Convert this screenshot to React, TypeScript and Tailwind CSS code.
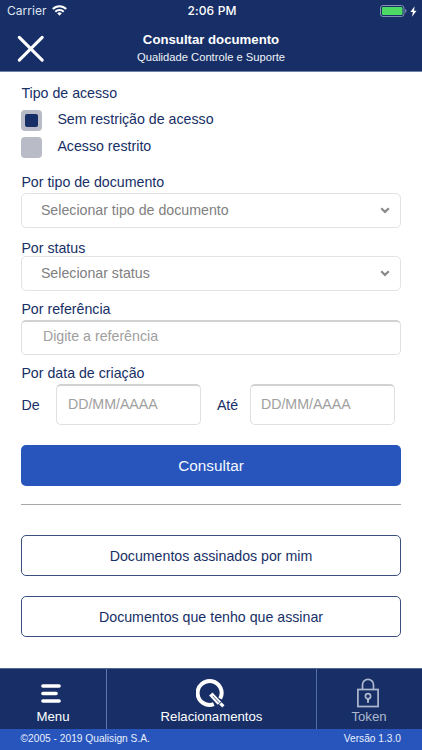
import React from "react";

function StatusBar() {
  return (
    <div className="flex h-[22px] items-center pl-[7px] pr-[5px] font-[Inter,sans-serif] text-[12px] leading-[14px]">
      <div className="flex flex-1 items-center gap-[5px]">
        <span className="text-[#dfe4ef] tracking-[0.05px]">Carrier</span>
        <svg width="15" height="11" viewBox="0 0 15 11" fill="none" stroke="#fff" strokeWidth="2" className="-mt-px">
          <path d="M0.8 4a9.4 9.4 0 0 1 13.4 0" />
          <path d="M3.3 6.7a5.9 5.9 0 0 1 8.4 0" />
          <path d="M5.2 8.3a3.3 3.3 0 0 1 4.6 0L7.5 10.7z" fill="#fff" stroke="none" />
        </svg>
      </div>
      <span className="font-medium tracking-[0.15px]">2:06 PM</span>
      <div className="flex flex-1 items-center justify-end gap-[3px]">
        <svg width="27" height="12" viewBox="0 0 27 12">
          <rect x="0.5" y="0.5" width="23.5" height="11" rx="2.5" fill="none" stroke="#8091b3" />
          <rect x="2" y="2" width="20.5" height="8" rx="1" fill="#4cd964" />
          <path d="M25.2 4v4q1.3-.7 1.3-2t-1.3-2" fill="#8091b3" />
        </svg>
        <svg width="7" height="11" viewBox="0 0 7 11" fill="#fff">
          <path d="M4.6 0.3 0.4 6h2.5L2 10.7 6.5 4.7H4z" />
        </svg>
      </div>
    </div>
  );
}

function Header() {
  return (
    <header className="h-[72px] shrink-0 border-b border-[#7182a8] bg-[#172f66] text-white">
      <StatusBar />
      <div className="grid h-[49px] grid-cols-[61px_1fr_61px]">
        <svg width="28" height="28" viewBox="0 0 28 28" stroke="#fff" strokeWidth="3.1" strokeLinecap="round" className="ml-[17px] mt-[13px]">
          <path d="M2.3 2.3 25.2 25.2M25.2 2.3 2.3 25.2" />
        </svg>
        <div className="pt-[9px] text-center">
          <h1 className="text-[13.2px] font-bold leading-[18px]">Consultar documento</h1>
          <p className="text-[11.2px] leading-4 text-[#f0f3f9]">Qualidade Controle e Suporte</p>
        </div>
      </div>
    </header>
  );
}

function Checkbox({ label, checked = false }: { label: string; checked?: boolean }) {
  return (
    <div className="flex h-[21px] items-center gap-[15px]">
      <span className="flex size-[21px] items-center justify-center rounded-[4px] bg-[#b9bcc7]">
        {checked && <span className="size-[13px] rounded-[2px] bg-[#172f66]" />}
      </span>
      <span className="pb-[3px]">{label}</span>
    </div>
  );
}

function Select({ text }: { text: string }) {
  return (
    <div className="flex h-[35px] items-center justify-between rounded-[5px] border border-[#e3e3e3] pl-[18.5px] pr-[10px] text-[#808080]">
      <span className="pb-px">{text}</span>
      <svg width="10" height="7" viewBox="0 0 10 7" fill="none" stroke="#8a8a8a" strokeWidth="2.2">
        <path d="M1.2 1.3 5 4.9l3.8-3.6" />
      </svg>
    </div>
  );
}

function Field({ placeholder, className }: { placeholder: string; className: string }) {
  return (
    <input
      placeholder={placeholder}
      className={`rounded-[5px] border border-t-[2px] border-[#e0e0e0] border-t-[#d2d2d2] placeholder:text-[#a0a0a0] placeholder:opacity-100 ${className}`}
    />
  );
}

const outlined = "flex h-[41px] items-center justify-center rounded-[5px] border border-[#3c5080]";

export default function App() {
  return (
    <div className="flex h-[750px] w-[422px] flex-col overflow-hidden bg-white font-['Liberation_Sans',Arial,sans-serif]">
      <Header />
      <main className="flex flex-1 flex-col pl-[21.4px] pr-[21.4px] pt-[13px] text-[14.2px] leading-4 text-[#172f66]">
        <p>Tipo de acesso</p>
        <div className="mt-[9px] flex flex-col gap-[5.5px]">
          <Checkbox label="Sem restrição de acesso" checked />
          <Checkbox label="Acesso restrito" />
        </div>
        <p className="mt-[16.5px]">Por tipo de documento</p>
        <div className="mt-[3px]">
          <Select text="Selecionar tipo de documento" />
        </div>
        <p className="mt-3">Por status</p>
        <Select text="Selecionar status" />
        <p className="mt-[10px]">Por referência</p>
        <Field placeholder="Digite a referência" className="mt-[3px] h-[35px] w-full pb-[5px] pl-[20.5px]" />
        <p className="mt-[10px]">Por data de criação</p>
        <div className="mt-[3px] flex h-[41px] items-center">
          <span className="w-[35px]">De</span>
          <Field placeholder="DD/MM/AAAA" className="h-[41px] w-[145px] pb-[3px] pl-[10.5px]" />
          <span className="ml-[15.5px] w-[33px]">Até</span>
          <Field placeholder="DD/MM/AAAA" className="h-[41px] w-[145px] pb-[3px] pl-[10px]" />
        </div>
        <button className="mt-5 h-[41px] rounded-[5px] bg-[#2755bc] pt-px text-[15.3px] text-[#f5f8ff]">Consultar</button>
        <hr className="mt-[18px] border-t-[1.5px] border-[#a6a6a6]" />
        <button className={`mt-[30px] ${outlined}`}>Documentos assinados por mim</button>
        <button className={`mt-5 ${outlined}`}>Documentos que tenho que assinar</button>
      </main>
      <footer className="shrink-0 text-white">
        <nav className="grid h-[61px] grid-cols-[107px_210px_105px] border-t border-[#53668f] bg-[#172f66] text-[13.2px] leading-4">
          <div className="flex flex-col items-center border-r border-[#5f79b0] pt-[15px]">
            <svg width="20" height="19" viewBox="0 0 20 19" stroke="#fff" strokeWidth="3.5" strokeLinecap="round" className="mb-[6px] mr-[4px]">
              <path d="M1.9 1.9h16.2M1.9 9.4h13.2M1.9 16.9h16.2" />
            </svg>
            <span>Menu</span>
          </div>
          <div className="flex flex-col items-center border-r border-[#536da5] pt-[9px]">
            <svg width="30" height="31" viewBox="0 0 30 31" fill="none" stroke="#fff" className="mr-[2px]">
              <path d="M17.8 26.2A12 12 0 1 1 24.2 20.6" strokeWidth="4" />
              <path d="m14.8 16 8.6 9.2" strokeWidth="4.6" />
              <path d="m24.4 25.4 3 3" strokeWidth="3.2" />
              <path d="m16.6 17.8 6.5 7" stroke="#172f66" strokeWidth="0.8" />
            </svg>
            <span>Relacionamentos</span>
          </div>
          <div className="flex flex-col items-center pr-[1px] pt-[9px] text-[#aeb8ce]">
            <svg width="22" height="30" viewBox="0 0 22 30" fill="none" stroke="currentColor" strokeWidth="1.7" className="mb-px mr-[3px]">
              <rect x="0.9" y="11.5" width="20.2" height="17" />
              <path d="M5.5 11.5V6.8a5.5 5.5 0 0 1 11 0v4.7" />
              <circle cx="11" cy="18.2" r="2.6" />
              <path d="M11 21v3.8" strokeWidth="2" />
            </svg>
            <span>Token</span>
          </div>
        </nav>
        <div className="flex h-[21px] items-center justify-between bg-[#2755bc] pb-px pl-[20.6px] pr-[21px] text-[10.2px] leading-3 text-[#e9effc]">
          <span>©2005 - 2019 Qualisign S.A.</span>
          <span>Versão 1.3.0</span>
        </div>
      </footer>
    </div>
  );
}
